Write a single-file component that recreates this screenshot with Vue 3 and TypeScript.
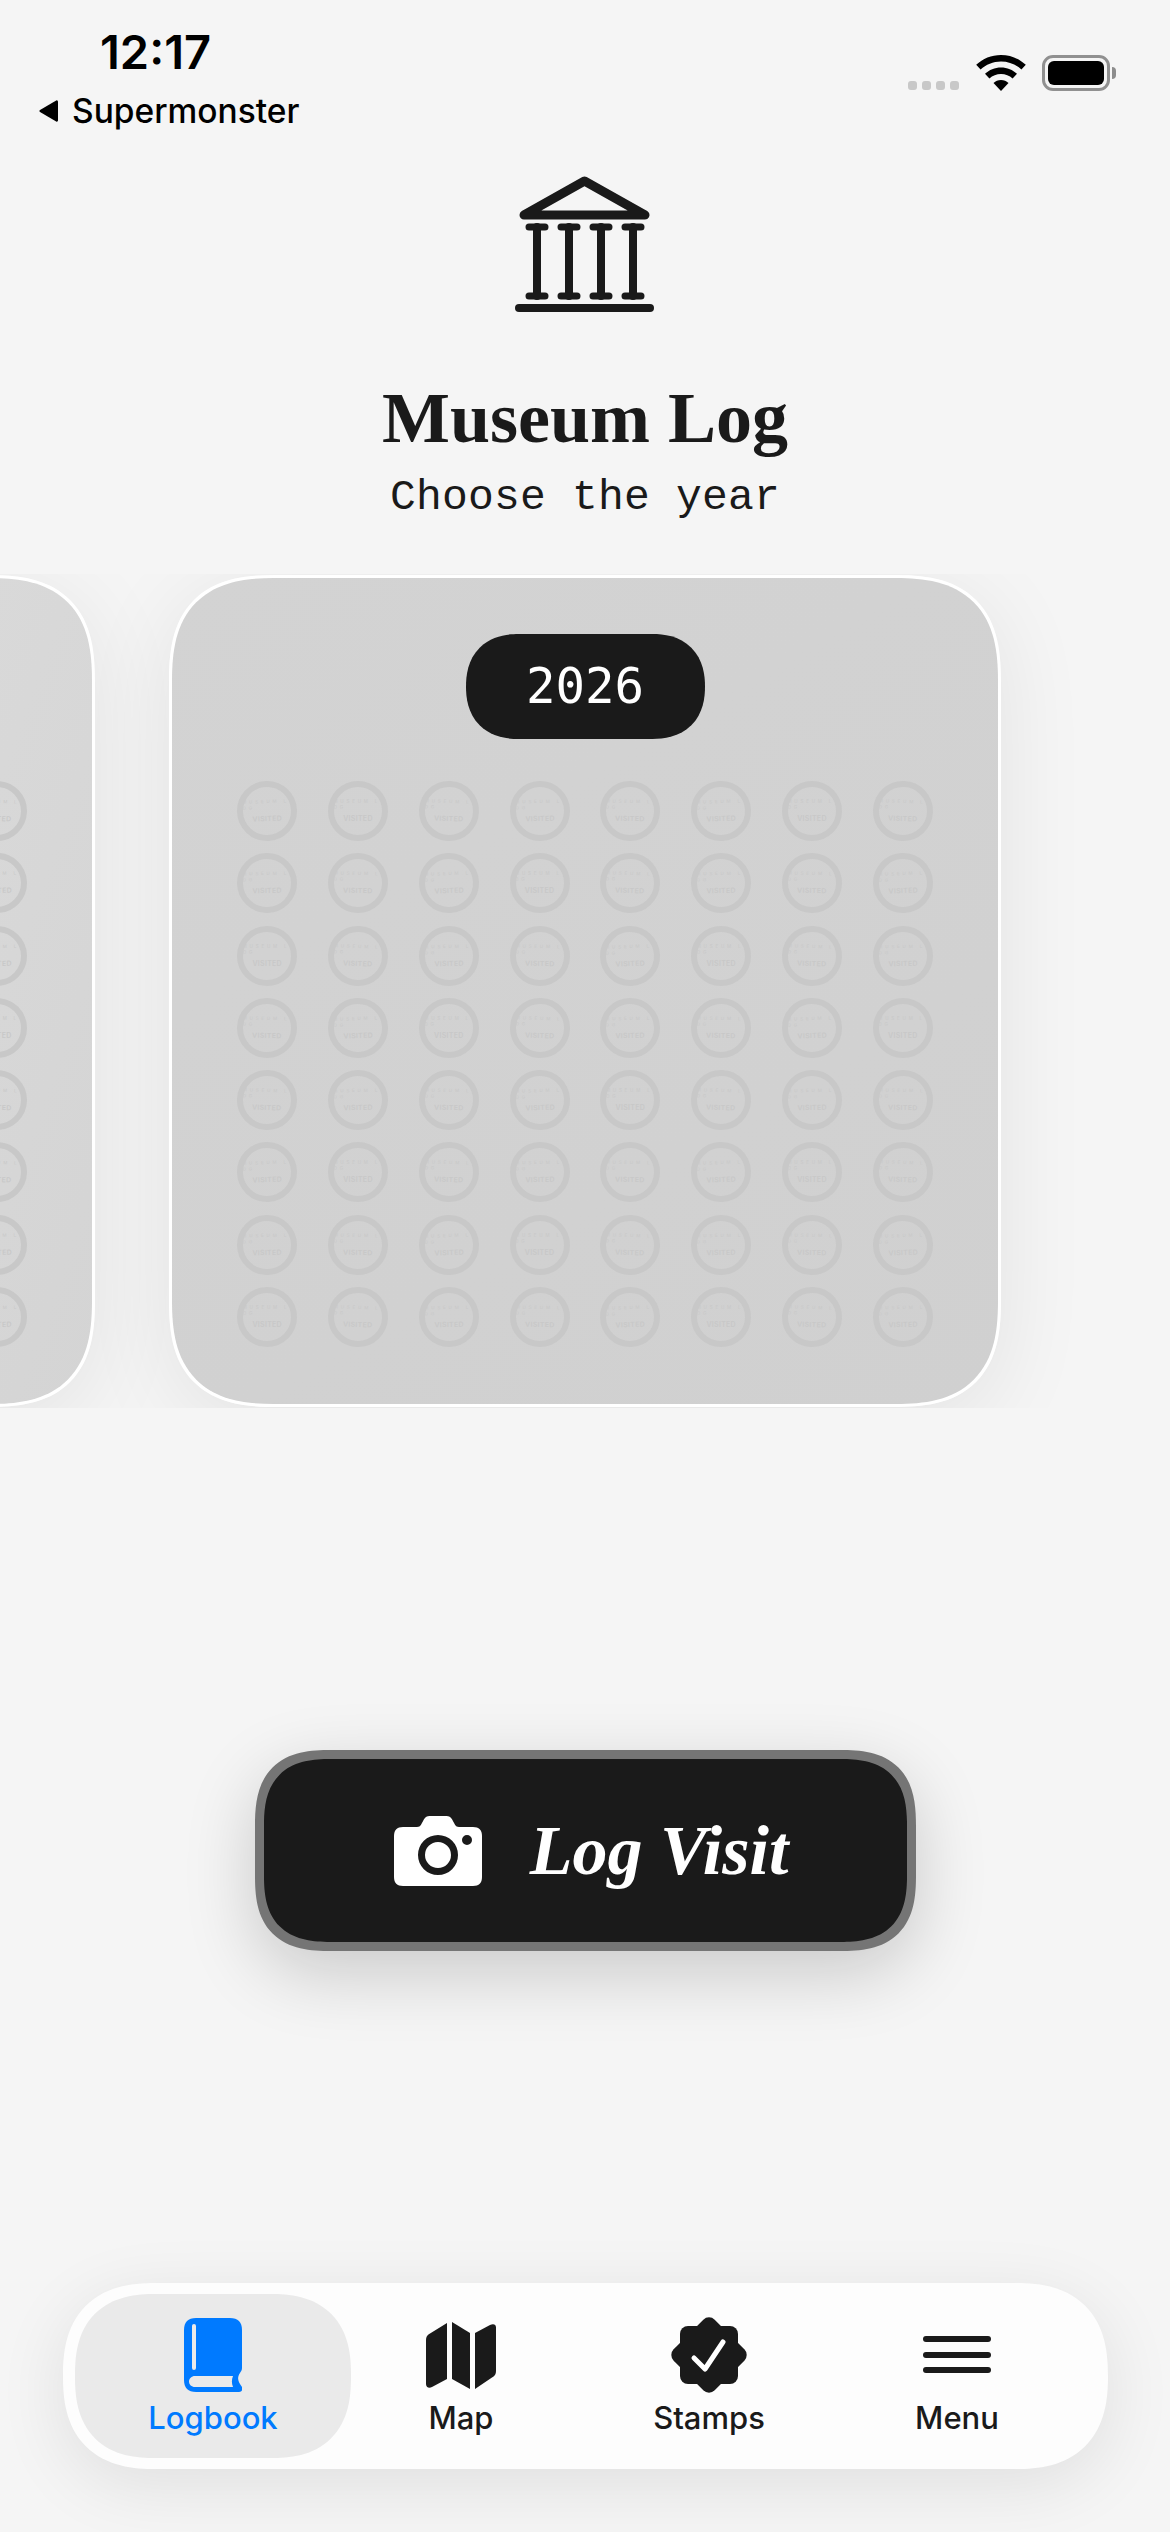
<template>
  <div class="screen">
    <header class="status">
      <div class="status-left">
        <div class="time">12:17</div>
        <div class="back">
          <svg class="back-arrow" viewBox="0 0 22 24"><path d="M20 2.500v19a1.200 1.200 0 0 1-1.800 1L2 13a1.200 1.200 0 0 1 0-2L18.200 1.500a1.200 1.200 0 0 1 1.800 1z" /></svg>
          <span>Supermonster</span>
        </div>
      </div>
      <div class="status-right">
        <div class="signal"><i v-for="n in 4" :key="n"></i></div>
        <svg class="wifi" viewBox="0 0 50 36">
          <path d="M25 0c9.600 0 18.300 3.700 24.800 9.800l-4.400 4.700C40 9.500 32.900 6.400 25 6.400S10 9.500 4.600 14.500L.2 9.800C6.700 3.700 15.400 0 25 0z" />
          <path d="M25 12.500c6.200 0 11.800 2.400 16 6.300l-4.400 4.700C33.500 20.700 29.400 19 25 19s-8.500 1.700-11.600 4.500L9 18.800c4.200-3.900 9.800-6.300 16-6.300z" />
          <path d="M25 25c2.900 0 5.500 1.100 7.500 2.900L25 36l-7.500-8.100c2-1.800 4.600-2.900 7.500-2.900z" />
        </svg>
        <div class="battery"><div class="battery-fill"></div></div>
        <div class="battery-cap"></div>
      </div>
    </header>

    <section class="heading">
      <svg class="museum" viewBox="0 0 140 138" fill="none" stroke="#1a1a1a" stroke-linecap="round" stroke-linejoin="round">
        <path d="M9 40 69.500 6 130 40z" stroke-width="9" />
        <path d="M14 52h16M46 52h16M78 52h16M110 52h16" stroke-width="7" />
        <path d="M14 121h16M46 121h16M78 121h16M110 121h16" stroke-width="7" />
        <path d="M22 52v69M54 52v69M86 52v69M118 52v69" stroke-width="8" />
        <path d="M4 133h131" stroke-width="8" />
      </svg>
      <h1 class="title">Museum Log</h1>
      <p class="subtitle">Choose the year</p>
    </section>

    <section class="carousel">
      <article v-for="card in cards" :key="card.year" class="year-card" :class="{ faded: !card.current }">
        <div class="year-pill">{{ card.year }}</div>
        <div class="stamps">
          <div v-for="stamp in stamps" :key="stamp.id" class="stamp" :style="{ transform: `rotate(${stamp.tilt}deg)` }">
            <span class="stamp-top">MUSEUM LOG</span>
            <span class="stamp-mid">VISITED</span>
          </div>
        </div>
      </article>
    </section>

    <div class="action">
      <button class="log-button" type="button">
        <svg class="camera" viewBox="0 0 88 70">
          <path fill-rule="evenodd" d="M9 11h14c2 0 3-.7 4-2.200l3-5.600C31.500 1 33 0 35.500 0h17C55 0 56.500 1 58 3.200l3 5.600c1 1.500 2 2.200 4 2.200h14c6 0 9 3 9 9v41c0 6-3 9-9 9H9c-6 0-9-3-9-9V20c0-6 3-9 9-9zm35 48a20 20 0 1 0 0-40 20 20 0 0 0 0 40zm0-7a13 13 0 1 1 0-26 13 13 0 0 1 0 26zm29-23a5 5 0 1 0 0-10 5 5 0 0 0 0 10z" />
        </svg>
        <span>Log Visit</span>
      </button>
    </div>

    <nav class="tabbar">
      <div v-for="tab in tabs" :key="tab.id" class="tab" :class="{ active: tab.id === activeTab }">
        <div class="tab-icon">
          <svg v-if="tab.id === 'logbook'" width="58" height="74" viewBox="0 0 58 74">
            <path fill="#007aff" fill-rule="evenodd" d="M12 0h34c8 0 12 4 12 12v38c0 2-1 3.500-2 5-2.500 3.500-2.500 7 0 11l2 3c1 2 0 5-3 5H12C4 74 0 70 0 62V12C0 4 4 0 12 0zM10 6a2 2 0 0 0-2 2v42a2 2 0 0 0 4 0V8a2 2 0 0 0-2-2zm1 52c-3.500 0-6 2.500-6 5.500s2.500 5.500 6 5.500h38c-1.500-3.500-1.500-7.500 0-11H11z" />
          </svg>
          <svg v-else-if="tab.id === 'map'" width="70" height="67" viewBox="0 0 70 67" fill="#1a1a1a">
            <path d="M21 1v56L6 65c-3 1.500-6 .5-6-3V18c0-3 1-5 4-6.500L21 1z" />
            <path d="M26 0l18 11v56L26 57V0z" />
            <path d="M49 11 64 3c3-1.500 6-1 6 2.500V49c0 3-1 5-4 6.500L49 67V11z" />
          </svg>
          <svg v-else-if="tab.id === 'stamps'" width="78" height="78" viewBox="0 0 78 78">
            <rect x="10" y="10" width="58" height="58" rx="8" fill="#1a1a1a" />
            <rect x="10" y="10" width="58" height="58" rx="8" fill="#1a1a1a" transform="rotate(45 39 39)" />
            <path fill="none" stroke="#fff" stroke-width="5" stroke-linecap="round" stroke-linejoin="round" d="M24 42l11 11 18-27" />
          </svg>
          <svg v-else width="68" height="38" viewBox="0 0 68 38" fill="#1a1a1a">
            <rect x="0" y="0" width="68" height="6" rx="3" />
            <rect x="0" y="16" width="68" height="6" rx="3" />
            <rect x="0" y="31" width="68" height="6" rx="3" />
          </svg>
        </div>
        <span class="tab-label">{{ tab.label }}</span>
      </div>
    </nav>
  </div>
</template>

<script setup lang="ts">
import { ref } from "vue";

interface Tab {
  id: string;
  label: string;
}

const tabs: Tab[] = [
  { id: "logbook", label: "Logbook" },
  { id: "map", label: "Map" },
  { id: "stamps", label: "Stamps" },
  { id: "menu", label: "Menu" },
];
const activeTab = ref("logbook");

const cards = [
  { year: 2025, current: false },
  { year: 2026, current: true },
];

// small pseudo random tilt, the stamps are never quite straight
const stamps = Array.from({ length: 64 }, (_, i) => ({
  id: i,
  tilt: ((i * 7) % 5) - 2,
}));
</script>

<style>
html,
body {
  margin: 0;
  background: #f5f5f5;
}
</style>

<style scoped>
.screen {
  width: 1170px;
  height: 2532px;
  background: #f5f5f5;
  overflow: hidden;
  font-family: Inter, "Liberation Sans", sans-serif;
  color: #1a1a1a;
}

.status {
  display: flex;
  justify-content: space-between;
  height: 175px;
  box-sizing: border-box;
  padding: 22px 54px 0 38px;
}
.status-left {
  display: flex;
  flex-direction: column;
  color: #000;
}
.time {
  font-size: 47px;
  font-weight: 600;
  line-height: 60px;
  margin-left: 62px;
}
.back {
  display: flex;
  align-items: center;
  gap: 12px;
  margin-top: 6px;
  font-size: 33.5px;
  font-weight: 500;
  line-height: 46px;
}
.back-arrow {
  width: 22px;
  height: 24px;
  fill: #000;
}
.status-right {
  display: flex;
  align-items: center;
  height: 54px;
  margin-top: 24px;
}
.signal {
  display: flex;
  gap: 5px;
  margin: 25px 17px 0 0;
}
.signal i {
  width: 9px;
  height: 9px;
  border-radius: 3px;
  background: #c8c8c8;
}
.wifi {
  width: 50px;
  height: 36px;
  margin-right: 16px;
  fill: #000;
}
.battery {
  width: 68px;
  height: 36px;
  box-sizing: border-box;
  border: 3px solid #909090;
  border-radius: 11px;
  padding: 3px;
}
.battery-fill {
  height: 100%;
  background: #000;
  border-radius: 6px;
}
.battery-cap {
  width: 4px;
  height: 12px;
  background: #8c8c8c;
  border-radius: 0 4px 4px 0;
  margin-left: 2px;
}

.heading {
  display: flex;
  flex-direction: column;
  align-items: center;
}
.museum {
  width: 140px;
  height: 138px;
}
.title {
  margin: 70px 0 0;
  font-family: "Liberation Serif", serif;
  font-size: 72px;
  font-weight: 700;
  line-height: 70px;
}
.subtitle {
  margin: 20px 0 0;
  font-family: "Liberation Mono", monospace;
  font-size: 43px;
  letter-spacing: 0.2px;
  line-height: 50px;
}

.carousel {
  display: flex;
  justify-content: flex-end;
  gap: 74px;
  margin-top: 51px;
  height: 834px;
  box-sizing: border-box;
  padding: 1px 169px 1px 0;
  overflow: hidden;
}
.year-card {
  flex: 0 0 832px;
  height: 832px;
  box-sizing: border-box;
  border: 3px solid #fff;
  border-radius: 92px;
  background: linear-gradient(150deg, #d3d3d3, #d0d0d0);
  box-shadow: 0 16px 90px rgba(0, 0, 0, 0.08);
  display: flex;
  flex-direction: column;
  align-items: center;
  padding-top: 56px;
}
.year-card.faded {
  background: linear-gradient(110deg, #e2e2e2, #d4d4d4);
}
.year-pill {
  width: 239px;
  height: 105px;
  border-radius: 52px;
  background: #1a1a1a;
  color: #fff;
  font-family: "DejaVu Sans Mono", monospace;
  font-size: 49px;
  line-height: 105px;
  text-align: center;
}
.stamps {
  display: grid;
  grid-template-columns: repeat(8, 60px);
  grid-auto-rows: 60px;
  column-gap: 30.8px;
  row-gap: 12.3px;
  margin-top: 42px;
}
.stamp {
  box-sizing: border-box;
  width: 60px;
  height: 60px;
  border: 6px solid #c8c8c8;
  border-radius: 50%;
  display: flex;
  flex-direction: column;
  align-items: center;
  color: #c8c8c8;
}
.stamp-top {
  width: 49px;
  margin-top: 12px;
  font-size: 4.500px;
  line-height: 6px;
  letter-spacing: 2.800px;
  word-break: break-all;
}
.stamp-mid {
  margin-top: 3px;
  font-size: 7px;
  line-height: 9px;
  letter-spacing: 0.3px;
  font-weight: 600;
}

.action {
  display: flex;
  justify-content: center;
  margin-top: 342px;
}
.log-button {
  width: 661px;
  height: 201px;
  box-sizing: border-box;
  border: 9px solid #757575;
  border-radius: 64px;
  background: #1a1a1a;
  color: #fff;
  box-shadow: 0 22px 70px rgba(0, 0, 0, 0.18);
  display: flex;
  align-items: center;
  justify-content: center;
  gap: 48px;
  padding: 0 0 0 12px;
  font-family: "Liberation Serif", serif;
  font-size: 70px;
  font-style: italic;
  font-weight: 700;
}
.camera {
  width: 88px;
  height: 70px;
  fill: #fff;
}

.tabbar {
  width: 1045px;
  height: 186px;
  margin: 332px 0 0 63px;
  box-sizing: border-box;
  padding: 11px 12px;
  border-radius: 88px;
  background: #fdfdfd;
  box-shadow: 0 16px 70px rgba(0, 0, 0, 0.09);
  display: flex;
}
.tab {
  width: 248px;
  display: flex;
  flex-direction: column;
  align-items: center;
  padding-top: 23px;
}
.tab.active {
  width: 276px;
  margin-right: -14px;
  border-radius: 80px;
  background: #eaeaea;
}
.tab-icon {
  height: 76px;
  display: flex;
  align-items: center;
  justify-content: center;
}
.tab-label {
  margin-top: 6px;
  font-size: 31px;
  font-weight: 500;
  line-height: 38px;
}
.tab.active .tab-label {
  color: #007aff;
}

/* continuous corners where the browser has them */
@supports (corner-shape: superellipse(1.4)) {
  .year-card {
    border-radius: 108px;
    corner-shape: superellipse(1.4);
  }
  .year-pill {
    border-radius: 53px;
    corner-shape: superellipse(1.2);
  }
  .log-button {
    border-radius: 76px;
    corner-shape: superellipse(1.4);
  }
  .tabbar {
    border-radius: 93px;
    corner-shape: superellipse(1.3);
  }
  .tab.active {
    border-radius: 81px;
    corner-shape: superellipse(1.3);
  }
}
</style>
